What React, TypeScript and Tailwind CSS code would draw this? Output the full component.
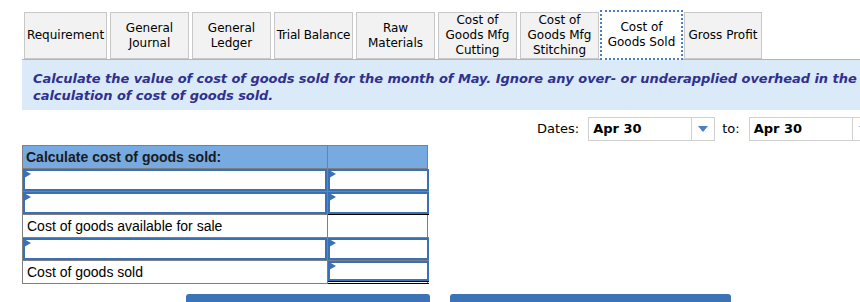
import React from "react";

const tabs = [
  { label: "Requirement", w: "w-[83px]" },
  { label: "General Journal", w: "w-[79px]" },
  { label: "General Ledger", w: "w-[79px]" },
  { label: "Trial Balance", w: "w-[79px]", nowrap: true },
  { label: "Raw Materials", w: "w-[79px]" },
  { label: "Cost of Goods Mfg Cutting", w: "w-[79px]" },
  { label: "Cost of Goods Mfg Stitching", w: "w-[79px]" },
  { label: "Cost of Goods Sold", w: "w-[83px]", active: true },
  { label: "Gross Profit", w: "w-[78px]" },
];

const InputBox = () => (
  <div className="relative h-full w-full border-2 border-[#3a70b5] bg-white">
    <div className="absolute -left-[1px] -top-[1px] h-0 w-0 border-y-[4px] border-l-[7px] border-y-transparent border-l-[#3a70b5]" />
  </div>
);

export default function App() {
  return (
    <div className="w-[900px] pl-[22px] pt-[10px] font-['DejaVu_Sans',sans-serif] text-black">
      {/* tabs */}
      <div className="flex items-end gap-[3px] pl-[2px]">
        {tabs.map((t) =>
          t.active ? (
            <div
              key={t.label}
              className={`${t.w} -mx-[2px] flex h-[50px] items-center justify-center border-2 border-dotted border-[#4a7fc0] bg-white px-1 text-center text-[12px] leading-[15px]`}
            >
              {t.label}
            </div>
          ) : (
            <div
              key={t.label}
              className={`${t.w} mb-[1px] flex h-[47px] items-center justify-center border border-[#c8c8c8] bg-[#f2f2f2] text-center text-[12px] leading-[15px] ${
                t.nowrap ? "whitespace-nowrap tracking-[-0.2px]" : "px-[2px]"
              }`}
            >
              {t.label}
            </div>
          )
        )}
      </div>

      {/* instructions */}
      <div className="-mt-[1px] h-[51px] border-t border-[#b4b4b4] bg-[#daeaf9] pl-[11px] pr-0 pt-[10px] text-[13px] font-bold italic leading-[17px] tracking-[-0.05px] text-[#30308f]">
        Calculate the value of cost of goods sold for the month of May. Ignore any over- or underapplied overhead in the
        calculation of cost of goods sold.
      </div>

      {/* dates */}
      <div className="mt-[7px] flex items-center pl-[515px] text-[13px]">
        <span className="mr-[9px]">Dates:</span>
        <div className="flex h-[24px] w-[127px] items-center border border-[#d0d0d0] bg-white">
          <span className="flex-1 pl-[4px] font-bold">Apr 30</span>
          <div className="flex h-full w-[23px] items-center justify-center border-l border-[#d0d0d0]">
            <div className="h-0 w-0 border-x-[5px] border-t-[6px] border-x-transparent border-t-[#4a7fc0]" />
          </div>
        </div>
        <span className="ml-[7px] mr-[9px]">to:</span>
        <div className="flex h-[24px] w-[127px] items-center border border-[#d0d0d0] bg-white">
          <span className="flex-1 pl-[4px] font-bold">Apr 30</span>
          <div className="flex h-full w-[23px] items-center justify-center border-l border-[#d0d0d0]">
            <div className="h-0 w-0 border-x-[5px] border-t-[6px] border-x-transparent border-t-[#4a7fc0]" />
          </div>
        </div>
      </div>

      {/* table */}
      <div className="mt-[4px] w-[406px] font-['Liberation_Sans',Arial,sans-serif] text-[14px]">
        <div className="grid grid-cols-[305px_101px] border border-[#7f7f7f] bg-[#76aae1]">
          <div className="h-[22px] border-r border-[#7f7f7f] pl-[3px] pt-[3px] font-bold leading-[16px] text-[#1a1a1a]">
            Calculate cost of goods sold:
          </div>
          <div />
        </div>
        <div className="grid grid-cols-[305px_101px] border-x border-[#7f7f7f]">
          <div className="h-[23px] border-b border-r border-[#7f7f7f]">
            <InputBox />
          </div>
          <div className="h-[23px] border-b border-[#7f7f7f]">
            <InputBox />
          </div>
          <div className="h-[23px] border-b border-r border-[#7f7f7f]">
            <InputBox />
          </div>
          <div className="h-[23px] border-b border-black">
            <InputBox />
          </div>
          <div className="h-[23px] border-b border-r border-[#7f7f7f] pl-[4px] pt-[3px] leading-[16px]">
            Cost of goods available for sale
          </div>
          <div className="h-[23px] border-b border-[#7f7f7f]" />
          <div className="h-[23px] border-b border-r border-[#7f7f7f]">
            <InputBox />
          </div>
          <div className="h-[23px] border-b border-[#7f7f7f]">
            <InputBox />
          </div>
          <div className="h-[23px] border-b border-r border-[#7f7f7f] pl-[4px] pt-[3px] leading-[16px]">
            Cost of goods sold
          </div>
          <div className="h-[23px] border-b-[3px] border-double border-black">
            <InputBox />
          </div>
        </div>
      </div>

      {/* buttons */}
      <div className="mt-[10px] flex gap-[20px] pl-[164px]">
        <div className="h-[14px] w-[244px] rounded-t-[3px] bg-[#3b74b6]" />
        <div className="h-[14px] w-[281px] rounded-t-[3px] bg-[#3b74b6]" />
      </div>
    </div>
  );
}
